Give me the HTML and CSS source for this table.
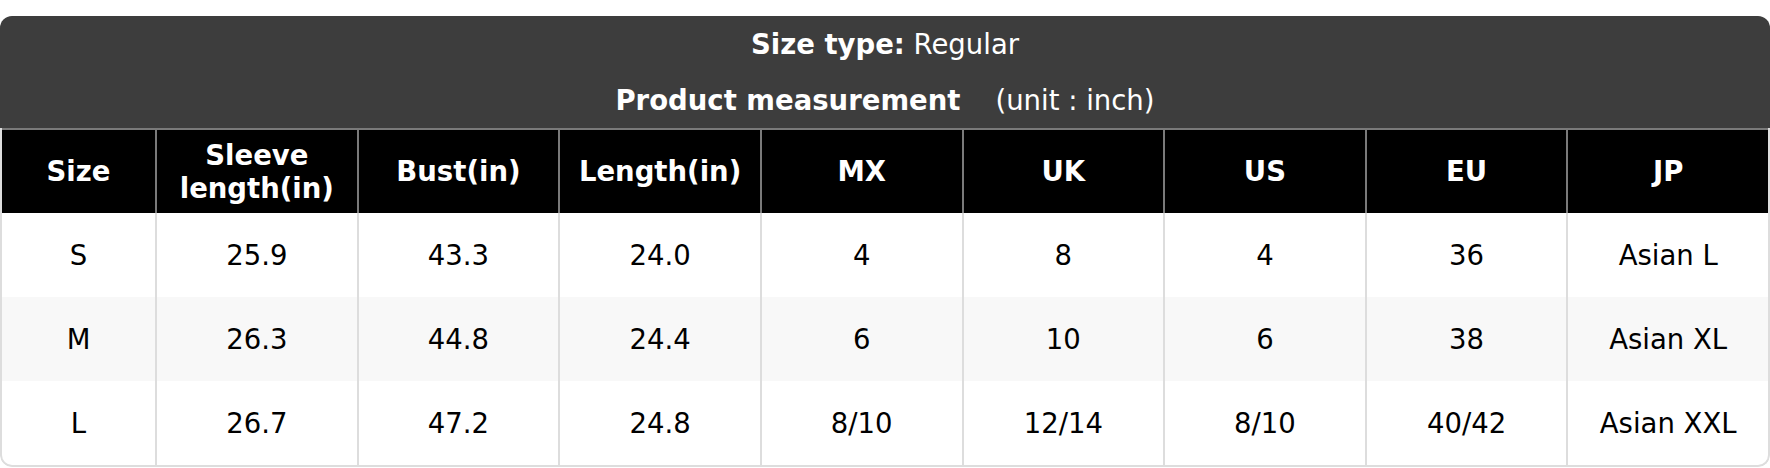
FILE: index.html
```html
<!DOCTYPE html>
<html lang="en">
<head>
<meta charset="utf-8">
<title>Size chart</title>
<link rel="stylesheet" href="styles.css">
</head>
<body>
<div class="card">
  <div class="title">
    <div class="title-line"><b>Size type:</b> Regular</div>
    <div class="title-line"><b>Product measurement</b><span class="unit">(unit : inch)</span></div>
  </div>
  <table class="chart">
    <colgroup>
      <col class="c-size">
      <col><col><col><col><col><col><col><col>
    </colgroup>
    <thead>
      <tr>
        <th>Size</th>
        <th>Sleeve length(in)</th>
        <th>Bust(in)</th>
        <th>Length(in)</th>
        <th>MX</th>
        <th>UK</th>
        <th>US</th>
        <th>EU</th>
        <th>JP</th>
      </tr>
    </thead>
    <tbody>
      <tr>
        <td>S</td><td>25.9</td><td>43.3</td><td>24.0</td><td>4</td><td>8</td><td>4</td><td>36</td><td>Asian L</td>
      </tr>
      <tr class="alt">
        <td>M</td><td>26.3</td><td>44.8</td><td>24.4</td><td>6</td><td>10</td><td>6</td><td>38</td><td>Asian XL</td>
      </tr>
      <tr>
        <td>L</td><td>26.7</td><td>47.2</td><td>24.8</td><td>8/10</td><td>12/14</td><td>8/10</td><td>40/42</td><td>Asian XXL</td>
      </tr>
    </tbody>
  </table>
</div>
</body>
</html>
```
FILE: styles.css
```css
html, body {
  margin: 0;
  padding: 0;
  background: #ffffff;
}
body {
  padding-top: 16px;
  font-family: "DejaVu Sans", "Liberation Sans", sans-serif;
  font-size: 27.5px;
}
.card {
  width: 1770px;
  border-radius: 12px;
  overflow: hidden;
  background: #ffffff;
}
.title {
  background: #3d3d3d;
  color: #ffffff;
  display: flex;
  flex-direction: column;
  align-items: center;
  gap: 24px;
  padding: 12px 0;
}
.title-line {
  line-height: 32px;
  white-space: nowrap;
}
.title-line b {
  font-weight: bold;
}
.unit {
  margin-left: 35px;
}
.chart {
  width: 100%;
  table-layout: fixed;
  border-collapse: separate;
  border-spacing: 0;
  border: 2px solid #dddddd;
  border-top: none;
  border-radius: 0 0 12px 12px;
}
.c-size {
  width: 153px;
}
.chart th {
  background: #000000;
  color: #ffffff;
  font-weight: bold;
  height: 83px;
  line-height: 33px;
  padding: 0 8px;
  border-top: 2px solid #7a7a7a;
  border-left: 2px solid #7a7a7a;
  text-align: center;
  vertical-align: middle;
}
.chart td {
  height: 84px;
  padding: 0 8px;
  text-align: center;
  vertical-align: middle;
  color: #000000;
  border-left: 2px solid #dddddd;
}
.chart th:first-child,
.chart td:first-child {
  border-left: none;
}
.chart tr.alt td {
  background: #f8f8f8;
}
```
